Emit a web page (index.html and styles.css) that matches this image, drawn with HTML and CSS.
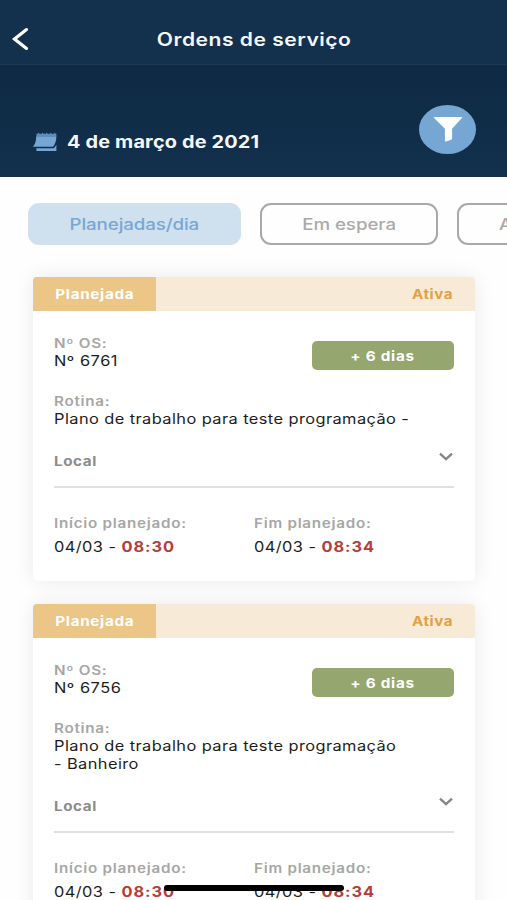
FILE: index.html
```html
<!DOCTYPE html>
<html lang="pt-BR">
<head>
<meta charset="utf-8">
<title>Ordens de serviço</title>
<link rel="stylesheet" href="styles.css">
</head>
<body>
<div class="screen">
  <header class="navbar">
    <svg class="back" width="20" height="26" viewBox="0 0 20 26"><path d="M16.500 3.600 4.500 13 16.500 22.400" fill="none" stroke="#fff" stroke-width="3.200" stroke-linecap="round"/></svg>
    <h1 class="title"><span class="wide mid">Ordens de serviço</span></h1>
  </header>
  <section class="hero">
    <svg class="calendar" width="26" height="20" viewBox="0 0 26 20">
      <path d="M4.400 1.800h1.400l.6-1.200 1 1.200h2.400l.8-1.200.9 1.200h2.400l.8-1.200.9 1.200H18l.8-1.200.9 1.200H22l.8-1.200.8 1.200h.8v2.400h-20z" fill="#5c8db9"/>
      <path d="M4.200 4.200h20.200c0 4.400-1.200 8.200-3.400 10.600H.7C3.100 12.600 4.200 8.800 4.200 4.200z" fill="#76a6d3"/>
      <path d="M4.400 16.200h17.200c1.300-.9 2.200-2 2.800-3.600V19h-20z" fill="#76a6d3"/>
    </svg>
    <div class="date"><span class="wide">4 de março de 2021</span></div>
    <div class="filter">
      <svg width="30" height="26" viewBox="0 0 30 26"><path d="M1.500 1h27c.6 0 .8.600.4 1.100L19.100 12.800v9.600q0 1-1 1.400l-5 1.600q-1.200.3-1.200-1V12.800L1.100 2.100C.7 1.600.9 1 1.500 1z" fill="#fff"/></svg>
    </div>
  </section>
  <nav class="tabs">
    <div class="tab active"><span class="wide mid">Planejadas/dia</span></div>
    <div class="tab second"><span class="wide mid">Em espera</span></div>
    <div class="tab third"><span class="wide">A</span></div>
  </nav>
  <main class="list">
    <article class="card">
      <div class="status"><div class="plan"><span class="wide mid">Planejada</span></div><span class="wide right live">Ativa</span></div>
      <div class="content">
        <div class="top">
          <div><div class="label"><span class="wide">Nº OS:</span></div><div class="value num"><span class="wide">Nº 6761</span></div></div>
          <div class="days"><span class="wide mid">+ 6 dias</span></div>
        </div>
        <div class="routine"><div class="label"><span class="wide">Rotina:</span></div><div class="value"><span class="wide">Plano de trabalho para teste programação -</span></div></div>
        <div class="local"><span class="wide">Local</span><svg class="chevron" width="16" height="10" viewBox="0 0 16 10"><path d="m2 1.600 6 5.600 6-5.600" fill="none" stroke="#858585" stroke-width="2.300"/></svg></div>
        <div class="times">
          <div><div class="label"><span class="wide">Início planejado:</span></div><div class="value when"><span class="wide">04/03 - <b>08:30</b></span></div></div>
          <div><div class="label"><span class="wide">Fim planejado:</span></div><div class="value when"><span class="wide">04/03 - <b>08:34</b></span></div></div>
        </div>
      </div>
    </article>
    <article class="card">
      <div class="status"><div class="plan"><span class="wide mid">Planejada</span></div><span class="wide right live">Ativa</span></div>
      <div class="content">
        <div class="top">
          <div><div class="label"><span class="wide">Nº OS:</span></div><div class="value num"><span class="wide">Nº 6756</span></div></div>
          <div class="days"><span class="wide mid">+ 6 dias</span></div>
        </div>
        <div class="routine"><div class="label"><span class="wide">Rotina:</span></div><div class="value"><span class="wide">Plano de trabalho para teste programação<br>- Banheiro</span></div></div>
        <div class="local"><span class="wide">Local</span><svg class="chevron" width="16" height="10" viewBox="0 0 16 10"><path d="m2 1.600 6 5.600 6-5.600" fill="none" stroke="#858585" stroke-width="2.300"/></svg></div>
        <div class="times">
          <div><div class="label"><span class="wide">Início planejado:</span></div><div class="value when"><span class="wide">04/03 - <b>08:30</b></span></div></div>
          <div><div class="label"><span class="wide">Fim planejado:</span></div><div class="value when"><span class="wide">04/03 - <b>08:34</b></span></div></div>
        </div>
      </div>
    </article>
  </main>
  <div class="home-bar"></div>
</div>
</body>
</html>
```
FILE: styles.css
```css
* { box-sizing: border-box; }
body { margin: 0; background: #fefefe; font-family: Inter, "Liberation Sans", sans-serif; }
svg { display: block; flex: none; }
.screen { position: relative; height: 900px; overflow: hidden; }

/* wide letterforms */
.wide { display: inline-block; white-space: nowrap; transform: scaleX(1.17); transform-origin: left center; }
.mid { transform-origin: center; }
.right { transform-origin: right center; }

.navbar { height: 65px; padding-top: 14px; display: grid; grid-template-columns: 40px 1fr 40px; align-items: center; background: #13304c; border-bottom: 1px solid #1b3853; }
.back { margin-left: 10px; }
.title { margin: 0; padding: 1px 0 0 1px; text-align: center; font-size: 18px; line-height: 24px; font-weight: 600; letter-spacing: .43px; color: #f4f7fa; }

.hero { height: 111.500px; padding: 0 31px 0 32px; display: flex; background: linear-gradient(#0f2a42, #102d49 60%, #13304c); }
.calendar { margin-top: 67px; }
.date { flex: 1; margin: 66px 0 0 9px; font-size: 17px; line-height: 22px; font-weight: 650; letter-spacing: .14px; color: #f4f7fa; }
.filter { width: 57px; height: 49px; margin-top: 39.500px; border-radius: 50%; background: #76a6d3; display: flex; align-items: center; justify-content: center; }

.tabs { display: flex; gap: 19px; padding: 26.500px 0 0 28px; }
.tab { flex: none; height: 42px; display: flex; align-items: center; justify-content: center; border: 2px solid #a9a9a9; border-radius: 11px; font-size: 16px; font-weight: 500; letter-spacing: -.05px; color: #aaa; }
.active { width: 213px; border-color: #cfe0ee; background: #cfe0ee; color: #76a8d6; letter-spacing: -.1px; }
.second { width: 178px; }
.third { width: 178px; justify-content: flex-start; padding-left: 40px; }

.list { padding: 32px 32px 0 33px; display: flex; flex-direction: column; gap: 23.500px; }
.card { border-radius: 5px; background: #fff; box-shadow: 0 0 20px rgba(0, 0, 0, .085); }
.status { height: 34px; display: flex; align-items: center; justify-content: space-between; padding-right: 22px; border-radius: 4px 4px 0 0; overflow: hidden; background: #f7ebd7; font-size: 13px; font-weight: 700; letter-spacing: .6px; }
.plan { width: 123px; height: 100%; display: flex; align-items: center; justify-content: center; background: #ebc686; color: #fff; }
.live { color: #e2a142; letter-spacing: .45px; }
.content { padding: 23px 21px 25px; }
.top { display: flex; justify-content: space-between; }
.label { font-size: 13px; line-height: 18px; font-weight: 600; letter-spacing: .63px; color: #a6a6a6; }
.value { font-size: 14px; line-height: 18px; letter-spacing: .36px; color: #1c1c1c; }
.num { letter-spacing: .45px; }
.days { width: 142px; height: 29px; margin-top: 7px; border-radius: 5px; background: #95a76f; display: flex; align-items: center; justify-content: center; font-size: 13px; font-weight: 700; letter-spacing: .65px; color: #fff; }
.routine { margin-top: 22px; }
.local { margin-top: 24px; padding-bottom: 15.500px; display: flex; justify-content: space-between; border-bottom: 2px solid #e0e0e0; font-size: 13px; line-height: 18px; font-weight: 700; letter-spacing: .5px; color: #8c8c8c; }
.times { margin-top: 26.500px; display: grid; grid-template-columns: 1fr 1fr; }
.when { margin-top: 5.500px; }
.when b { color: #b83b38; letter-spacing: .8px; }

.home-bar { position: absolute; left: 164px; top: 885px; width: 180px; height: 5.500px; border-radius: 3px; background: #000; }
```
